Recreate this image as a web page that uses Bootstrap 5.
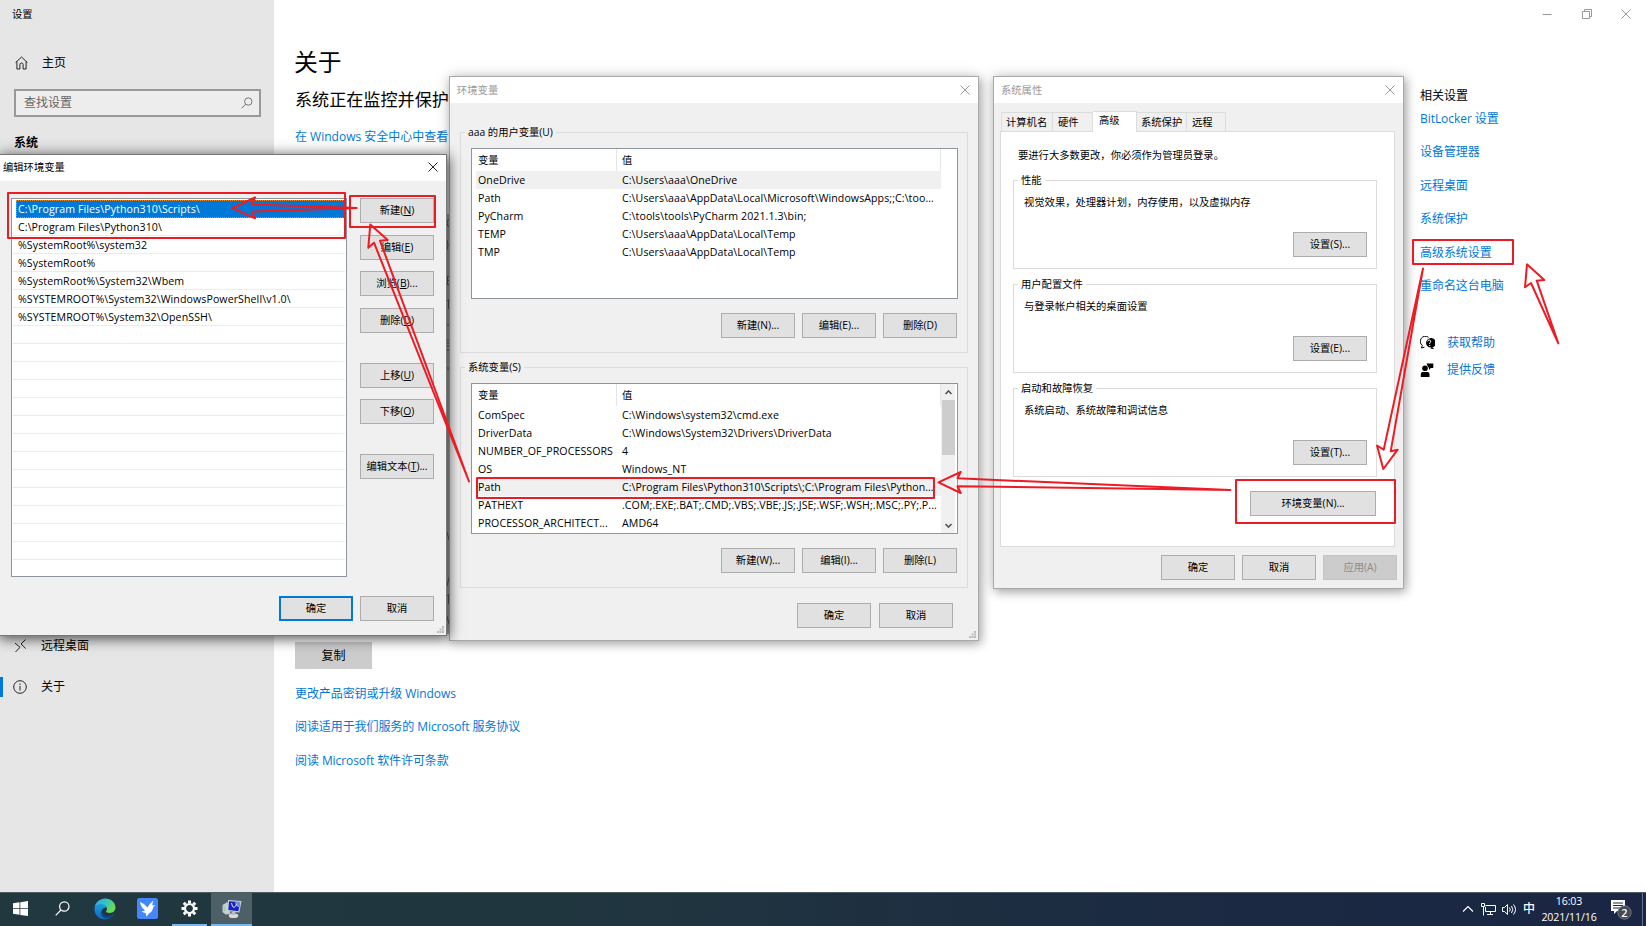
<!DOCTYPE html>
<html lang="zh-CN">
<head>
  <meta charset="UTF-8">
  <meta name="viewport" content="width=device-width, initial-scale=1.0">
  <title>设置</title>
  <link href="https://cdn.jsdelivr.net/npm/bootstrap@5.3.3/dist/css/bootstrap.min.css" rel="stylesheet">
  <style>
    body {
      width: 1646px;
      height: 926px;
      overflow: hidden;
      font-family: "Open Sans", "Noto Sans CJK SC", sans-serif;
      font-size: 12px;
      line-height: 1;
      color: #000;
      background: #fff;
    }
    svg { display: block; flex: none; }
    a { color: #0078d7; text-decoration: none; white-space: nowrap; }
    .desk { width: 1646px; height: 892px; }

    /* settings window */
    .side { width: 274px; background: #e6e6e6; }
    .side .side-title { height: 28px; padding-left: 12px; font-size: 10.3px; }
    .side .side-home { height: 26px; margin-top: 22px; padding-left: 15px; gap: 14px; }
    .search-box { height: 28px; margin: 13px 13px 0 14px; padding: 0 6px 0 8px; border: 2px solid #999; color: #666; background: #ededed; }
    .side-group { height: 26px; margin-top: 13px; padding-left: 14px; font-weight: 700; }
    .side-lower { margin-top: 471px; }
    .side-item { height: 41px; padding-left: 13px; gap: 14px; }
    .side-item.current { padding-left: 0; gap: 0; height: 37px; }
    .side-item.current i { width: 3px; height: 20px; margin-right: 10px; background: #0078d7; }
    .side-item.current span { margin-left: 14px; }
    .about { width: 1146px; padding-left: 21px; flex: none; }
    .about h1 { height: 38px; margin: 43px 0 0 -1px; font-size: 23.8px; line-height: 38px; font-weight: 400; }
    .about h2 { height: 30px; margin: 4px 0 0; font-size: 17.1px; line-height: 30px; font-weight: 400; }
    .about-link { height: 20px; margin-top: 12px; }
    .copy-btn { width: 77px; height: 27px; margin-top: 495px; padding-top: 1px; background: #ccc; }
    .about-more { margin-top: 8px; letter-spacing: -.08px; }
    .about-more a { height: 33.4px; line-height: 33.4px; }
    .related { width: 226px; }
    .related-links { margin-top: 55px; }
    .related-links a { height: 33.4px; line-height: 33.4px; letter-spacing: -.05px; }
    .related-links span { height: 24px; line-height: 25px; margin-bottom: -5px; }
    .related-help { height: 27px; gap: 12px; flex: none; }
    .caption-btns { height: 28px; padding-right: 15px; gap: 29.5px; }

    /* classic dialogs */
    .dlg { position: absolute; background: #f0f0f0; border: 1px solid #a9a9a9; box-shadow: 2px 3px 9px rgba(0,0,0,.28), 0 0 14px rgba(0,0,0,.16); font-size: 10.3px; }
    .dlg-title { height: 26px; background: #fff; color: #999; padding: 0 8px 0 7px; }
    .dlg-edit { left: -2px; top: 154px; width: 449px; height: 482px; border-color: #777; box-shadow: 2px 3px 12px rgba(0,0,0,.5), 0 0 14px rgba(0,0,0,.3); z-index: 3; }
    .dlg-edit .dlg-title { color: #000; padding: 0 8px 2px 4px; }
    .dlg-env { left: 449px; top: 76px; width: 530px; height: 565px; z-index: 2; }
    .dlg-sys { left: 993px; top: 76px; width: 411px; height: 513px; z-index: 2; }
    .wbtn { display: flex; align-items: center; justify-content: center; flex: none; width: 74px; height: 25px; padding-bottom: 1px; background: #e1e1e1; border: 1px solid #adadad; white-space: nowrap; }
    .wbtn.primary { border: 2px solid #0078d7; }
    .wbtn.off { background: #ccc; border-color: #c4c4c4; color: #8b8b8b; }
    .grp { position: relative; border: 1px solid #dcdcdc; }
    .grp-name { position: absolute; top: -8px; left: 4px; height: 16px; line-height: 15px; padding: 0 3px; background: #f0f0f0; white-space: nowrap; }
    .dlg-sys .grp-name { background: #fff; }
    .lbox { background: #fff; border: 1px solid #8f959e; overflow: hidden; }
    .path-list { width: 336px; height: 379px; padding: 1px 1px 0; }
    .path-row { height: 18px; line-height: 19px; padding-left: 5px; border-bottom: 1px solid #ececec; white-space: nowrap; font-size: 10.6px; letter-spacing: .09px; flex: none; }
    .path-row.picked { margin-left: 3px; padding-left: 2px; background: #0078d7; color: #fff; border: 0; outline: 1px dotted #e88b2e; outline-offset: -1px; }
    .edit-btns { margin: -1px 12px 0 13px; }

    .var-list { width: 487px; height: 151px; margin: 15px 0 0 10px; }
    .var-head { height: 22px; width: 469px; }
    .var-row { height: 18px; width: 465px; margin-left: 4px; font-size: 10.6px; letter-spacing: .08px; }
    .var-row.picked { background: #f0f0f0; }
    .c-name { width: 140px; padding-left: 2px; white-space: nowrap; }
    .var-head .c-name { width: 145px; height: 22px; padding-left: 6px; border-right: 1px solid #e5e5e5; }
    .var-head .c-val { height: 22px; padding-left: 5px; border-right: 1px solid #e5e5e5; }
    .c-val { flex: 1; padding-left: 6px; white-space: nowrap; }
    .scroll { width: 14px; background: #f0f0f0; }
    .scroll b { width: 13px; height: 55px; background: #cdcdcd; }
    .btn-line { gap: 7px; }
    .grp .btn-line { margin: 14px 10px 0 0; }

    .wtabs { height: 20px; margin: 8px 0 0 7px; }
    .wtab { height: 19px; border: 1px solid #dcdcdc; border-bottom: 0; border-left: 0; padding-left: 4px; white-space: nowrap; }
    .wtab.active { height: 21px; background: #fff; margin-bottom: -1px; z-index: 1; padding: 0 0 3px 6px; }
    .pane { width: 395px; height: 416px; margin-left: 6px; padding: 0 17px 0 12px; background: #fff; border: 1px solid #dcdcdc; }
    .pane-note { height: 48px; padding: 18px 0 0 5px; }
    .dlg-sys .grp { height: 89px; margin-bottom: 15px; padding: 16px 9px 11px 10px; }
    .grip { position: absolute; right: 2px; bottom: 2px; }

    /* sliver of the page between two dialogs */
    .sliver { position: absolute; left: 446px; top: 214px; width: 4px; height: 420px; overflow: hidden; z-index: 1; background: #bdbdbd; }

    /* taskbar */
    .taskbar { height: 34px; background: linear-gradient(90deg, #21383f 0, #20363f 35%, #1b2942 75%, #1a2643); color: #fff; border-top: 1px solid #4d5d63; }
    .tb-app { width: 42px; height: 33px; padding-bottom: 2px; }
    .tb-app.open { border-bottom: 2px solid #76b9ed; width: 35px; margin: 0 4px; padding: 0; }
    .tb-app.front { width: 41px; background: #4d6067; border-bottom: 2px solid #76b9ed; padding: 0; }
    .tray { padding: 0 2px 1px 0; }
    .clock { width: 60px; font-size: 10.6px; line-height: 16px; text-align: center; letter-spacing: -.1px; padding-bottom: 1px; }
    .marks { position: absolute; left: 0; top: 0; z-index: 10; }
  </style>
</head>
<body>
  <div class="desk d-flex">
    <aside class="side d-flex flex-column">
      <div class="side-title d-flex align-items-center">设置</div>
      <div class="side-home d-flex align-items-center">
        <svg width="13" height="14" viewBox="0 0 13 14" fill="none" stroke="#222" stroke-width="1"><path d="M.6 6.600 6.500 1l5.900 5.600M1.900 5.500v7.500h3V8.600a1.600 1.600 0 0 1 3.200 0V13h3V5.500"/></svg>
        <span>主页</span>
      </div>
      <div class="search-box d-flex align-items-center justify-content-between">
        <span>查找设置</span>
        <svg width="12" height="12" viewBox="0 0 12 12" fill="none" stroke="#777" stroke-width="1"><circle cx="7.300" cy="4.500" r="3.700"/><path d="M4.700 7.200.6 11.300"/></svg>
      </div>
      <div class="side-group d-flex align-items-center">系统</div>
      <div class="side-lower">
        <div class="side-item d-flex align-items-center pb-1">
          <svg width="14" height="14" viewBox="0 0 14 14" fill="none" stroke="#222" stroke-width="1"><path d="m2 4 5 4.300L2.500 13M12.500.5 8 5l4.800 4.500"/></svg>
          <span>远程桌面</span>
        </div>
        <div class="side-item current d-flex align-items-center"><i></i>
          <svg width="14" height="14" viewBox="0 0 14 14" fill="none" stroke="#222" stroke-width="1"><circle cx="7" cy="7" r="6.300"/><path d="M7 6v4.500M7 3.500V5"/></svg>
          <span>关于</span>
        </div>
      </div>
    </aside>

    <main class="about d-flex flex-column align-items-start">
      <h1>关于</h1>
      <h2>系统正在监控并保护</h2>
      <a class="about-link d-flex align-items-center" href="#">在 Windows 安全中心中查看详</a>
      <div class="copy-btn d-flex align-items-center justify-content-center">复制</div>
      <div class="about-more d-flex flex-column">
        <a href="#">更改产品密钥或升级 Windows</a>
        <a href="#">阅读适用于我们服务的 Microsoft 服务协议</a>
        <a href="#">阅读 Microsoft 软件许可条款</a>
      </div>
    </main>

    <section class="related">
      <div class="caption-btns d-flex align-items-center justify-content-end">
        <svg width="10" height="10" stroke="#999"><path d="M.5 5.500h9"/></svg>
        <svg width="10" height="10" fill="none" stroke="#999"><path d="M.5 2.500h7v7h-7zM2.500 2.500v-2h7v7h-2"/></svg>
        <svg width="10" height="10" stroke="#999"><path d="m.5.5 9 9M9.500.5l-9 9"/></svg>
      </div>
      <div class="related-links d-flex flex-column">
        <span>相关设置</span>
        <a href="#">BitLocker 设置</a>
        <a href="#">设备管理器</a>
        <a href="#">远程桌面</a>
        <a href="#">系统保护</a>
        <a href="#">高级系统设置</a>
        <a href="#">重命名这台电脑</a>
      </div>
      <div class="related-help d-flex align-items-center" style="margin-top:27px">
        <svg width="15" height="14" viewBox="0 0 15 14"><path d="M4.500 11.200 1.500 12l.8-2.500A5 5 0 0 1 8.500 1.300" fill="none" stroke="#000"/><path d="M9 2.500a4.800 4.800 0 1 1 2.200 9.100 4.800 4.800 0 0 1-4.500-2.300A4.800 4.800 0 0 1 9 2.500zM12 11l2.300 2.300-4-.8z"/><path d="M7.700 5.400a1.500 1.500 0 1 1 2 1.500v1M9.700 9v1" fill="none" stroke="#fff"/></svg>
        <a href="#">获取帮助</a>
      </div>
      <div class="related-help d-flex align-items-center">
        <svg width="15" height="14" viewBox="0 0 15 14"><circle cx="5" cy="5.300" r="2.800"/><path d="M.8 14V11q0-2 2-2h4.700q2 0 2 2v3zM6.500.5h6.800v4.600h-2.500L9 7V5L7.500 3z"/></svg>
        <a href="#">提供反馈</a>
      </div>
    </section>
  </div>

  <div class="sliver">
    <svg width="4" height="420" fill="none" stroke="#666"><path d="M4 5q-3 0-3 4t3 4M1 26q2 5 0 10M1.500 62v9M1.500 62.500H4M1.500 66.500H4M1.500 70.500H4M1 87l1.500-1.500V95M2 110v2M1 126h3M1 129h3M1 132h3M1 136h3M2 153v3M1 318l2 8M4 360l-3 12M1 382l1.500-1.500V390M1 402l2 8"/></svg>
  </div>

  <!-- 环境变量 -->
  <div class="dlg dlg-env">
    <div class="dlg-title d-flex align-items-center justify-content-between">
      <span>环境变量</span>
      <svg width="10" height="10" stroke="#999"><path d="m.5.5 9 9M9.500.5l-9 9"/></svg>
    </div>
    <div class="grp" style="margin:29px 10px 0;height:221px">
      <span class="grp-name">aaa 的用户变量(U)</span>
      <div class="lbox var-list">
        <div class="var-head d-flex"><div class="c-name d-flex align-items-center">变量</div><div class="c-val d-flex align-items-center">值</div></div>
        <div class="var-row picked d-flex align-items-center"><div class="c-name">OneDrive</div><div class="c-val">C:\Users\aaa\OneDrive</div></div>
        <div class="var-row d-flex align-items-center"><div class="c-name">Path</div><div class="c-val">C:\Users\aaa\AppData\Local\Microsoft\WindowsApps;;C:\too...</div></div>
        <div class="var-row d-flex align-items-center"><div class="c-name">PyCharm</div><div class="c-val">C:\tools\tools\PyCharm 2021.1.3\bin;</div></div>
        <div class="var-row d-flex align-items-center"><div class="c-name">TEMP</div><div class="c-val">C:\Users\aaa\AppData\Local\Temp</div></div>
        <div class="var-row d-flex align-items-center"><div class="c-name">TMP</div><div class="c-val">C:\Users\aaa\AppData\Local\Temp</div></div>
      </div>
      <div class="btn-line d-flex justify-content-end"><div class="wbtn">新建(N)...</div><div class="wbtn">编辑(E)...</div><div class="wbtn">删除(D)</div></div>
    </div>
    <div class="grp" style="margin:14px 10px 0;height:221px">
      <span class="grp-name">系统变量(S)</span>
      <div class="lbox var-list d-flex">
        <div>
          <div class="var-head d-flex"><div class="c-name d-flex align-items-center">变量</div><div class="c-val d-flex align-items-center">值</div></div>
          <div class="var-row d-flex align-items-center"><div class="c-name">ComSpec</div><div class="c-val">C:\Windows\system32\cmd.exe</div></div>
          <div class="var-row d-flex align-items-center"><div class="c-name">DriverData</div><div class="c-val">C:\Windows\System32\Drivers\DriverData</div></div>
          <div class="var-row d-flex align-items-center"><div class="c-name">NUMBER_OF_PROCESSORS</div><div class="c-val">4</div></div>
          <div class="var-row d-flex align-items-center"><div class="c-name">OS</div><div class="c-val">Windows_NT</div></div>
          <div class="var-row picked d-flex align-items-center"><div class="c-name">Path</div><div class="c-val" style="letter-spacing:.04px">C:\Program Files\Python310\Scripts\;C:\Program Files\Python...</div></div>
          <div class="var-row d-flex align-items-center"><div class="c-name">PATHEXT</div><div class="c-val">.COM;.EXE;.BAT;.CMD;.VBS;.VBE;.JS;.JSE;.WSF;.WSH;.MSC;.PY;.P...</div></div>
          <div class="var-row d-flex align-items-center"><div class="c-name">PROCESSOR_ARCHITECT...</div><div class="c-val">AMD64</div></div>
        </div>
        <div class="scroll d-flex flex-column align-items-center">
          <svg width="13" height="16" fill="none" stroke="#555" stroke-width="1.600"><path d="m3.500 10 3-3 3 3"/></svg>
          <b></b>
          <svg class="mt-auto" width="13" height="16" fill="none" stroke="#555" stroke-width="1.600"><path d="m3.500 7 3 3 3-3"/></svg>
        </div>
      </div>
      <div class="btn-line d-flex justify-content-end"><div class="wbtn">新建(W)...</div><div class="wbtn">编辑(I)...</div><div class="wbtn">删除(L)</div></div>
    </div>
    <div class="btn-line d-flex justify-content-end" style="margin:15px 25px 0 0;gap:8px"><div class="wbtn">确定</div><div class="wbtn">取消</div></div>
    <svg class="grip" width="7" height="7" fill="#bbb"><path d="M5 0h2v2H5zM5 2.500h2v2H5zM2.500 2.500h2v2h-2zM5 5h2v2H5zM2.500 5h2v2h-2zM0 5h2v2H0z"/></svg>
  </div>

  <!-- 系统属性 -->
  <div class="dlg dlg-sys">
    <div class="dlg-title d-flex align-items-center justify-content-between">
      <span>系统属性</span>
      <svg width="10" height="10" stroke="#999"><path d="m.5.5 9 9M9.500.5l-9 9"/></svg>
    </div>
    <div class="wtabs d-flex align-items-end">
      <div class="wtab d-flex align-items-center border-start" style="width:52px">计算机名</div>
      <div class="wtab d-flex align-items-center" style="width:40px;padding-left:5px">硬件</div>
      <div class="wtab active d-flex align-items-center" style="width:44px">高级</div>
      <div class="wtab d-flex align-items-center" style="width:50px">系统保护</div>
      <div class="wtab d-flex align-items-center" style="width:39px;padding-left:5px">远程</div>
    </div>
    <div class="pane">
      <div class="pane-note">要进行大多数更改，你必须作为管理员登录。</div>
      <div class="grp d-flex flex-column justify-content-between">
        <span class="grp-name">性能</span>
        <div>视觉效果，处理器计划，内存使用，以及虚拟内存</div>
        <div class="d-flex justify-content-end"><div class="wbtn">设置(S)...</div></div>
      </div>
      <div class="grp d-flex flex-column justify-content-between">
        <span class="grp-name">用户配置文件</span>
        <div>与登录帐户相关的桌面设置</div>
        <div class="d-flex justify-content-end"><div class="wbtn">设置(E)...</div></div>
      </div>
      <div class="grp d-flex flex-column justify-content-between">
        <span class="grp-name">启动和故障恢复</span>
        <div>系统启动、系统故障和调试信息</div>
        <div class="d-flex justify-content-end"><div class="wbtn">设置(T)...</div></div>
      </div>
      <div class="d-flex justify-content-end" style="margin:-1px 1px 0 0"><div class="wbtn" style="width:126px">环境变量(N)...</div></div>
    </div>
    <div class="btn-line d-flex justify-content-end" style="margin:8px 6px 0 0"><div class="wbtn">确定</div><div class="wbtn">取消</div><div class="wbtn off">应用(A)</div></div>
  </div>

  <!-- 编辑环境变量 -->
  <div class="dlg dlg-edit">
    <div class="dlg-title d-flex align-items-center justify-content-between">
      <span>编辑环境变量</span>
      <svg width="10" height="10" stroke="#222"><path d="m.5.5 9 9M9.500.5l-9 9"/></svg>
    </div>
    <div class="d-flex" style="margin:17px 0 0 12px">
      <div class="lbox path-list">
        <div class="path-row picked">C:\Program Files\Python310\Scripts\</div>
        <div class="path-row">C:\Program Files\Python310\</div>
        <div class="path-row">%SystemRoot%\system32</div>
        <div class="path-row">%SystemRoot%</div>
        <div class="path-row">%SystemRoot%\System32\Wbem</div>
        <div class="path-row">%SYSTEMROOT%\System32\WindowsPowerShell\v1.0\</div>
        <div class="path-row">%SYSTEMROOT%\System32\OpenSSH\</div>
        <div class="path-row"></div><div class="path-row"></div><div class="path-row"></div><div class="path-row"></div>
        <div class="path-row"></div><div class="path-row"></div><div class="path-row"></div><div class="path-row"></div>
        <div class="path-row"></div><div class="path-row"></div><div class="path-row"></div><div class="path-row"></div><div class="path-row"></div>
      </div>
      <div class="edit-btns d-flex flex-column">
        <div class="wbtn" style="margin-top:1px">新建(<u>N</u>)</div>
        <div class="wbtn" style="margin-top:12px">编辑(<u>E</u>)</div>
        <div class="wbtn" style="margin-top:11px">浏览(<u>B</u>)...</div>
        <div class="wbtn" style="margin-top:12px">删除(<u>D</u>)</div>
        <div class="wbtn" style="margin-top:30px">上移(<u>U</u>)</div>
        <div class="wbtn" style="margin-top:11px">下移(<u>O</u>)</div>
        <div class="wbtn" style="margin-top:30px">编辑文本(<u>T</u>)...</div>
      </div>
    </div>
    <div class="d-flex justify-content-end" style="margin:19px 12px 0 0;gap:7px"><div class="wbtn primary">确定</div><div class="wbtn">取消</div></div>
    <svg class="grip" width="7" height="7" fill="#bbb"><path d="M5 0h2v2H5zM5 2.500h2v2H5zM2.500 2.500h2v2h-2zM5 5h2v2H5zM2.500 5h2v2h-2zM0 5h2v2H0z"/></svg>
  </div>

  <footer class="taskbar d-flex">
    <div class="tb-app d-flex align-items-center justify-content-center" style="width:41px">
      <svg width="15" height="15" fill="#fff"><path d="M0 2.200 6.500 1.300V7H0zM7.300 1.200 15 0v7H7.300zM0 7.800h6.500v5.900L0 12.800zM7.300 7.800H15V15l-7.700-1.100z"/></svg>
    </div>
    <div class="tb-app d-flex align-items-center justify-content-center">
      <svg width="15" height="15" fill="none" stroke="#fff" stroke-width="1.200"><circle cx="9.300" cy="5.500" r="4.700"/><path d="M6 9 .7 14.300"/></svg>
    </div>
    <div class="tb-app d-flex align-items-center justify-content-center" style="width:43px">
      <svg width="22" height="22" viewBox="0 0 22 22">
        <defs>
          <linearGradient id="eg1" x1="0" y1="0" x2="1" y2=".5"><stop offset="0" stop-color="#2fa8e0"/><stop offset=".5" stop-color="#35c1c9"/><stop offset="1" stop-color="#6bdd4d"/></linearGradient>
          <linearGradient id="eg2" x1="0" y1="0" x2="0" y2="1"><stop offset="0" stop-color="#1b9de2"/><stop offset="1" stop-color="#1365b8"/></linearGradient>
        </defs>
        <path d="M.6 9.500C1.500 4 6 .5 11 .5c6.200 0 10.500 4.300 10.500 8.800 0 3.700-2.800 5.700-5.700 5.700-2.600 0-3.700-.9-3.700-1.500 0-.7.9-.9.9-2.700C13 8.500 10.500 6.700 7.500 6.700c-3 0-5.500 1-6.900 2.800z" fill="url(#eg1)"/>
        <path d="M.5 11c0-2.500 2.500-5 6.200-5 3.500 0 6.100 2.200 6.300 4.600-1-1.300-4.500-1-5 2-.6 4 3.600 8.400 8.500 7.200-1.700 1.200-3.500 1.700-5.500 1.700C5 21.500.5 17 .5 11z" fill="url(#eg2)"/>
        <path d="M8 12c-1 4.500 3.500 7 7 6.200 2-.4 3.500-1.400 4.500-2.300.5-.3.900.1.600.6-3 5.500-9.500 4.500-11.500 2.500C6.500 17 6.200 13.500 8 12z" fill="#0c4a94"/>
      </svg>
    </div>
    <div class="tb-app d-flex align-items-center justify-content-center">
      <svg width="21" height="21" viewBox="0 0 21 21"><rect width="21" height="21" rx="2.500" fill="#4486fb"/><path d="M3 4q4.500 1.500 7.500 5.500Q13 5 16.500 2.500 15 6 15.500 7.500q1.500-.5 3-.5-2 1.200-2.500 3-.7 4-4 5.500-1.300 2-2.800 3.300.3-2-.7-3.800-2-.3-4-1.800 2 .2 3.500-.7Q4 9.500 3 4z" fill="#fff"/></svg>
    </div>
    <div class="tb-app open d-flex align-items-center justify-content-center">
      <svg width="17" height="17" viewBox="-8.500 -8.500 17 17" fill="none" stroke="#fff"><circle r="4.500" stroke-width="2.200"/><path stroke-width="3" d="M0-5.500V-8M0 5.500V8M-5.500 0H-8M5.500 0H8M-3.900-3.900l-1.800-1.800M3.900 3.900l1.800 1.800M-3.900 3.900l-1.800 1.800M3.900-3.900l1.800-1.800"/></svg>
    </div>
    <div class="tb-app front d-flex align-items-center justify-content-center">
      <svg width="20" height="20" viewBox="0 0 20 20"><path d="m.5 6 5-3 3 12-5 .5L.5 13z" fill="#c7ccd0"/><path d="m2 7 .5 5" stroke="#8c9"/><path d="m6 1 13.500 1-2.200 11.500L5 12z" fill="#cfd4d9"/><path d="m7 2.200 11.200.8-1.800 9.200L6.300 11z" fill="#1522c9"/><path d="m13 2.700 5.200.3-.9 5.500q-4.500-1.500-4.300-5.800z" fill="#6d8fe6"/><path d="m9.500 4 1 3.500 1.800 1L15 5" stroke="#dfe6ff" stroke-width="1" fill="none"/><ellipse cx="11.500" cy="16.800" rx="4.800" ry="2.300" fill="#d8dadb"/><path d="M9.500 13h4v3h-4z" fill="#b8bcbf"/></svg>
    </div>
    <div class="tray ms-auto d-flex align-items-center">
      <svg width="12" height="8" fill="none" stroke="#fff" stroke-width="1.200"><path d="m1 6.500 5-5 5 5"/></svg>
      <svg style="margin-left:7px" width="16" height="13" fill="none" stroke="#fff"><path d="M4.500 2.500h10v6h-10V4M.5.500h3v3h-3zM2.500 4v8.500M6 11.500h6M9.500 9v2"/></svg>
      <svg style="margin-left:5px" width="16" height="13" fill="none" stroke="#fff"><path d="M.5 4.500h2l3-3v10l-3-3h-2zM7.500 4.500q1.500 2 0 4M9.500 3q2.500 3.500 0 7M11.500 1.500q4 5 0 10"/></svg>
      <span style="margin-left:5px;font-size:12px;font-weight:500">中</span>
      <div class="clock" style="margin-left:4px">16:03<br>2021/11/16</div>
      <svg style="margin-left:11px" width="22" height="23"><path d="M1 2h14v11H7l-3 3v-3H1z" fill="#fff"/><path d="M3 5h10M3 7.500h10M3 10h7" stroke="#1a2643"/><circle cx="14.500" cy="14.500" r="6.700" fill="#444a55" stroke="#8a8f98" stroke-width=".7"/><text x="14.500" y="18.500" font-size="11" font-weight="600" text-anchor="middle" fill="#fff">2</text></svg>
      <svg style="margin-left:10px" width="2" height="33" stroke="#66708a"><path d="M.5 0v33"/></svg>
    </div>
  </footer>

  <!-- 红色标注 -->
  <svg class="marks" width="1646" height="926" fill="none" stroke="#ed1c24" stroke-width="2" stroke-linejoin="round">
    <path d="M8 193h337v45H8zM350 196h85v31h-85zM477 478h457v20H477zM1236 480h159v43h-159zM1413 240h100v24h-100z"/>
    <path d="M356.700 208 251.700 204.300 255 197.500 232.500 208 255 218.300 251.700 211.700z"/>
    <path d="M469 481.500 380 240.700 387.700 240 370.300 224.500 368.300 247.700 374 242.700z"/>
    <path d="M1230.500 490 957.500 478.300 960.700 472 938.500 482.300 960.700 493 957.500 486.300z"/>
    <path d="M1423 268.500 1383.700 449.700 1377 445.500 1383.300 469 1397.700 449.700 1390.700 451.300z"/>
    <path d="M1558.300 343.300 1536.700 280.700 1544.300 280 1527 264.300 1525 287.300 1531 283z"/>
  </svg>
  <script src="https://cdn.jsdelivr.net/npm/bootstrap@5.3.3/dist/js/bootstrap.bundle.min.js"></script>
</body>
</html>
